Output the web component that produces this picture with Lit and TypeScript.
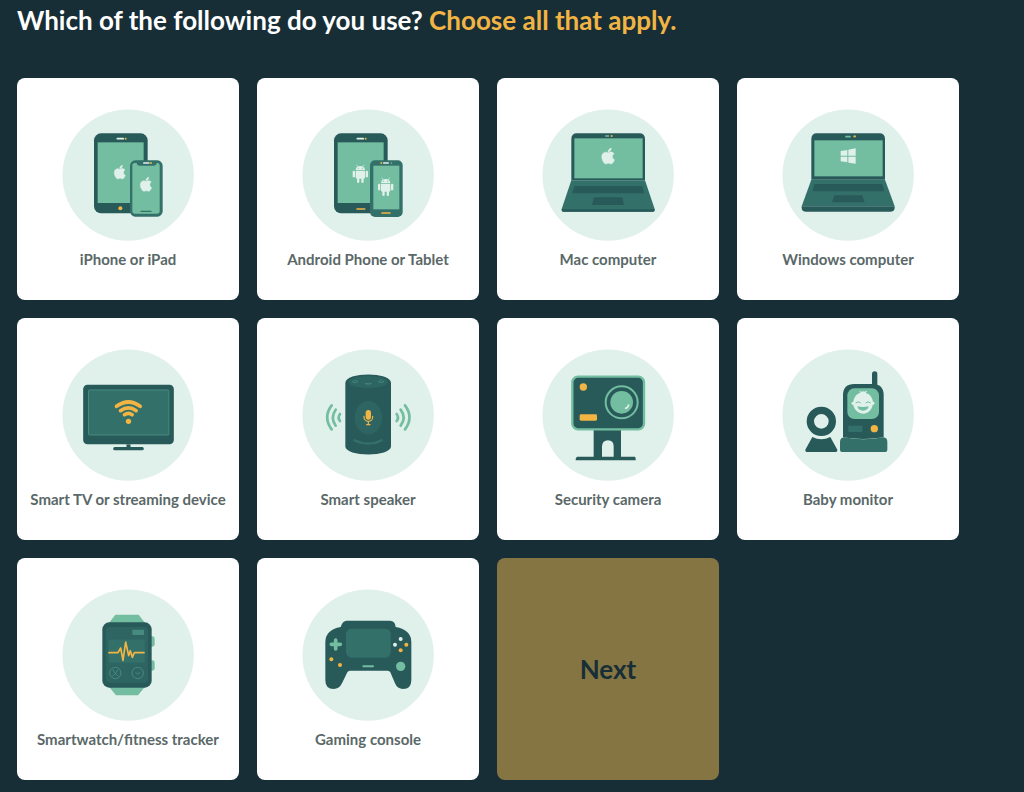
import { LitElement, html, svg, css, type SVGTemplateResult } from "lit";
import { customElement, state } from "lit/decorators.js";

const DARK = "#285a5a";
const MID = "#34706a";
const LIGHT = "#73bda0";
const PALE = "#e0f0ea";
const GOLD = "#f2b544";

const apple = (x: number, y: number, s: number) => svg`
  <path transform="translate(${x} ${y}) scale(${s})" fill=${PALE} stroke=${PALE} stroke-width="0.8"
    d="M12.152 6.896c-.948 0-2.415-1.078-3.96-1.04-2.04.027-3.91 1.183-4.961 3.014-2.117 3.675-.546 9.103 1.519 12.09 1.013 1.454 2.208 3.09 3.792 3.039 1.52-.065 2.09-.987 3.935-.987 1.831 0 2.35.987 3.96.948 1.637-.026 2.676-1.48 3.676-2.948 1.156-1.688 1.636-3.325 1.662-3.415-.039-.013-3.182-1.221-3.22-4.857-.026-3.04 2.48-4.494 2.597-4.559-1.429-2.09-3.623-2.324-4.39-2.376-2-.156-3.675 1.09-4.61 1.09zM15.53 3.83c.843-1.012 1.4-2.427 1.245-3.83-1.207.052-2.662.805-3.532 1.818-.78.896-1.454 2.338-1.273 3.714 1.338.104 2.715-.688 3.559-1.701"/>`;

const robot = (x: number, y: number) => svg`
  <g transform="translate(${x} ${y})" fill=${PALE}>
    <path d="M9 15a14 12 0 0 1 28 0z"/>
    <path d="M12 0l4 6M34 0l-4 6" stroke=${PALE} stroke-width="2" stroke-linecap="round"/>
    <circle cx="17" cy="10" r="1.6" fill=${LIGHT}/><circle cx="29" cy="10" r="1.6" fill=${LIGHT}/>
    <path d="M9 17h28v20a4 4 0 0 1-4 4H13a4 4 0 0 1-4-4z"/>
    <rect x="0" y="17" width="7" height="20" rx="3.5"/>
    <rect x="39" y="17" width="7" height="20" rx="3.5"/>
    <rect x="13" y="36" width="7" height="18" rx="3.5"/>
    <rect x="26" y="36" width="7" height="18" rx="3.5"/>
  </g>`;

const tabletBody = svg`
  <rect x="118" y="99" width="161" height="240" rx="21" fill=${DARK}/>
  <rect x="129" y="126" width="138" height="182" fill=${LIGHT}/>
  <path d="M188 115h18" stroke=${PALE} stroke-width="5" stroke-linecap="round"/>
  <circle cx="213" cy="115" r="3" fill=${GOLD}/>`;

const applePair = svg`
  ${tabletBody}
  <circle cx="197" cy="324" r="6" fill=${GOLD}/>
  ${apple(175, 195, 1.7)}
  <rect x="226" y="180" width="98" height="169" rx="16" fill=${MID}/>
  <path d="M241 188h5q1 8 9 8h42q8 0 9-8h2q7 0 7 8v136q0 8-8 8h-66q-8 0-8-8V196q0-8 8-8z" fill=${LIGHT}/>
  <path d="M267 188h16" stroke=${PALE} stroke-width="4" stroke-linecap="round"/>
  <circle cx="289" cy="188" r="3" fill=${GOLD}/>
  <path d="M259 333h30" stroke=${MID} stroke-width="4" stroke-linecap="round"/>
  ${apple(253, 231, 1.75)}`;

const androidPair = svg`
  ${tabletBody}
  <path d="M187 326h23" stroke=${GOLD} stroke-width="5" stroke-linecap="round"/>
  ${robot(174, 194)}
  <rect x="226" y="180" width="98" height="170" rx="15" fill=${MID}/>
  <rect x="236" y="196" width="78" height="131" fill=${LIGHT}/>
  <path d="M267 188h14" stroke=${PALE} stroke-width="4" stroke-linecap="round"/>
  <circle cx="260" cy="188" r="3" fill=${GOLD}/><circle cx="290" cy="188" r="2.5" fill=${LIGHT}/>
  <path d="M262 338h24" stroke=${GOLD} stroke-width="5" stroke-linecap="round"/>
  ${robot(250, 233)}`;

const mac = svg`
  <path d="M110 240V116q0-17 17-17h187q17 0 17 17v124z" fill=${DARK}/>
  <rect x="119" y="114" width="205" height="120" fill=${LIGHT}/>
  <path d="M213 107h9" stroke=${LIGHT} stroke-width="4" stroke-linecap="round"/>
  <circle cx="231" cy="107" r="3" fill=${GOLD}/>
  ${apple(197, 144, 1.95)}
  <path d="M110 240h221l29 86v3q0 5-5 5H86q-5 0-5-5v-3z" fill=${MID}/>
  <path d="M81 327h279v2q0 5-5 5H86q-5 0-5-5z" fill=${DARK}/>
  <path d="M119 257h204l6 22H113z" fill=${DARK}/>
  <path d="M178 291h85l5 23h-96z" fill=${DARK}/>`;

const windows = svg`
  <path d="M110 238V116q0-17 17-17h187q17 0 17 17v122z" fill=${DARK}/>
  <rect x="119" y="120" width="205" height="108" fill=${LIGHT}/>
  <path d="M214 109h12" stroke=${LIGHT} stroke-width="5" stroke-linecap="round"/>
  <circle cx="240" cy="108" r="3.5" fill=${GOLD}/>
  <path d="M198 152l20-3v17h-20zM221 148l22-4v22h-22zM198 169h20v17l-20-3zM221 169h22v21l-22-3z" fill=${PALE}/>
  <path d="M110 238h221l29 80H81z" fill=${MID}/>
  <path d="M81 318h279v4q0 12-14 12H95q-14 0-14-12z" fill=${DARK}/>
  <path d="M119 251h204l6 22H113z" fill=${DARK}/>
  <path d="M179 285h84l7 21h-98z" fill=${DARK}/>`;

const tv = svg`
  <g transform="translate(-104.5 0)">
    <rect x="190" y="133" width="272" height="179" rx="13" fill=${DARK}/>
    <rect x="206" y="149" width="241" height="135" rx="2" fill=${MID} stroke="#478a7e" stroke-width="3"/>
    <path d="M326 312v12" stroke=${DARK} stroke-width="12"/>
    <path d="M285 325h82" stroke=${DARK} stroke-width="10" stroke-linecap="round"/>
    <g fill="none" stroke=${GOLD} stroke-width="11" stroke-linecap="round">
      <path d="M290 198q36-26 71 0"/><path d="M302 211q24-17 47 0"/><path d="M314 223q12-8 23 0"/>
    </g>
    <circle cx="326" cy="243" r="8" fill=${GOLD}/>
  </g>`;

const speaker = svg`
  <path d="M152 128c0-34 137-34 137 0v190c0 33-137 33-137 0z" fill=${DARK}/>
  <ellipse cx="220.5" cy="125" rx="59" ry="18" fill="#2d6562"/>
  <g fill="none" stroke="#438378" stroke-width="3" stroke-linecap="round">
    <path d="M174 124l8-4 8 4-8 3zM252 124l8-4 8 4-8 3zM212 130q9-3 18 0q-9 4-18 0"/>
  </g>
  <ellipse cx="221" cy="232" rx="41" ry="50" fill="#2e6562"/>
  <path d="M179 300q42 20 82 0" fill="none" stroke=${MID} stroke-width="7" stroke-linecap="round"/>
  <rect x="213" y="209" width="16" height="29" rx="8" fill=${GOLD}/>
  <path d="M208 228v3a13 12 0 0 0 26 0v-3M221 243v10M216 253h10" fill="none" stroke=${GOLD} stroke-width="3.5" stroke-linecap="round"/>
  <g fill="none" stroke=${LIGHT} stroke-width="8" stroke-linecap="round">
    <path d="M111 195q-27 36 0 72M123 208q-17 24 0 48M136 221q-8 11 0 21"/>
    <path d="M331 195q27 36 0 72M318 208q18 24 0 48M306 221q8 11 0 21"/>
  </g>`;

const camera = svg`
  <path d="M177 265h82v84h42q3 4 2 11H123q-1-7 4-11h50zM202 349h35v-31q0-18-17-18t-18 18z" fill=${DARK} fill-rule="evenodd"/>
  <rect x="113" y="109" width="215" height="158" rx="17" fill=${DARK} stroke=${LIGHT} stroke-width="7"/>
  <circle cx="146" cy="140" r="11" fill=${GOLD}/>
  <rect x="135" y="222" width="52" height="19" rx="4" fill=${GOLD}/>
  <circle cx="261" cy="186" r="48" fill="none" stroke=${LIGHT} stroke-width="6"/>
  <circle cx="261" cy="186" r="34" fill=${LIGHT}/>
  <path d="M282 194q-2 8-9 10" fill="none" stroke=${PALE} stroke-width="5" stroke-linecap="round"/>`;

const baby = svg`
  <circle cx="140" cy="243" r="33" fill="none" stroke=${DARK} stroke-width="22"/>
  <path d="M113 290q27 14 54 0l21 38q1 7-7 7H99q-8 0-7-7z" fill=${DARK}/>
  <path d="M300 101v40" stroke=${DARK} stroke-width="16" stroke-linecap="round"/>
  <path d="M205 291V165q0-34 34-34h54q34 0 34 34v126q-61 10-122 0z" fill=${DARK}/>
  <rect x="218" y="144" width="95" height="92" rx="21" fill=${LIGHT}/>
  <path d="M236 184c2-16 12-25 22-27l-4-4q5-1 8 2l3-4 3 4q5-4 9-2l-4 5c12 3 20 12 22 26q6 0 5 5t-6 5c-3 16-14 26-28 26s-27-10-30-26q-6 0-6-5t6-5z" fill=${PALE}/>
  <path d="M244 187q7-6 13 0M274 187q7-6 13 0" fill="none" stroke=${LIGHT} stroke-width="3" stroke-linecap="round"/>
  <path d="M248 198q17 4 34 0q-3 13-17 13t-17-13z" fill=${LIGHT}/>
  <rect x="221" y="256" width="42" height="19" rx="2" fill=${MID}/>
  <circle cx="299" cy="265" r="11" fill=${GOLD}/>
  <path d="M209 291q57 12 117 0q12 1 12 14v24q0 6-6 6H202q-6 0-6-6v-24q0-13 13-14z" fill=${MID}/>`;

const watch = svg`
  <g transform="translate(-75 0)">
    <path d="M238 128l19-25h70l19 25zM238 319l21 26h66l21-26z" fill=${LIGHT}/>
    <rect x="358" y="168" width="17" height="31" rx="7" fill=${LIGHT}/>
    <rect x="358" y="240" width="17" height="31" rx="7" fill=${LIGHT}/>
    <rect x="218" y="126" width="148" height="196" rx="21" fill=${DARK}/>
    <rect x="228" y="140" width="127" height="167" rx="12" fill="#2e6562"/>
    <rect x="308" y="148" width="35" height="16" rx="2" fill="#478a7e"/>
    <rect x="237" y="178" width="108" height="69" fill=${MID}/>
    <path d="M238 217h27l8-14 7 37 8-55 9 41 5-15 6 20 6-14h29" fill="none" stroke=${GOLD} stroke-width="5" stroke-linecap="round" stroke-linejoin="round"/>
    <g fill="none" stroke="#478a7e" stroke-width="3">
      <circle cx="257" cy="278" r="17"/><circle cx="324" cy="278" r="17"/>
      <path d="M249 268q8 14 17 20M265 268q-7 14-17 20M318 276l6 6 7-6"/>
    </g>
  </g>`;

const gamepad = svg`
  <path d="M138 140q6-19 18-19h130q15 0 17 19q47 8 47 46v114q0 26-25 26-17 0-24-17l-14-33q-2-5-8-5H166q-6 0-8 5l-16 33q-8 17-25 17-25 0-25-26V186q0-38 46-46z" fill=${DARK}/>
  <rect x="154" y="145" width="134" height="87" rx="17" fill=${MID}/>
  <path d="M123 179v27M110 192h27" stroke=${LIGHT} stroke-width="11" stroke-linecap="round"/>
  <path d="M206 258h29" stroke=${LIGHT} stroke-width="6" stroke-linecap="round"/>
  <circle cx="318" cy="258" r="14" fill=${LIGHT}/>
  <g fill=${GOLD}>
    <circle cx="110" cy="237" r="6"/><circle cx="136" cy="254" r="6"/>
    <circle cx="335" cy="193" r="6"/><circle cx="318" cy="210" r="6"/>
  </g>
  <circle cx="318" cy="176" r="6" fill=${PALE}/><circle cx="301" cy="193" r="6" fill=${PALE}/>`;

interface Device {
  id: string;
  label: string;
  art: SVGTemplateResult;
}

const DEVICES: Device[] = [
  { id: "ios", label: "iPhone or iPad", art: applePair },
  { id: "android", label: "Android Phone or Tablet", art: androidPair },
  { id: "mac", label: "Mac computer", art: mac },
  { id: "windows", label: "Windows computer", art: windows },
  { id: "tv", label: "Smart TV or streaming device", art: tv },
  { id: "speaker", label: "Smart speaker", art: speaker },
  { id: "camera", label: "Security camera", art: camera },
  { id: "baby", label: "Baby monitor", art: baby },
  { id: "watch", label: "Smartwatch/fitness tracker", art: watch },
  { id: "console", label: "Gaming console", art: gamepad },
];

@customElement("app-root")
export class AppRoot extends LitElement {
  @state() private chosen = new Set<string>();

  static styles = css`
    :host {
      display: block;
      box-sizing: border-box;
      min-height: 100vh;
      padding: 4px 65px 12px 17px;
      background: #172e36;
      font-family: Lato, sans-serif;
      font-weight: 700;
    }
    .title {
      margin: 0 0 42px;
      color: #fff;
      font-size: 26px;
      line-height: 32px;
      font-weight: 700;
    }
    .hint {
      color: #f2b544;
    }
    .grid {
      display: grid;
      grid-template-columns: repeat(4, minmax(0, 1fr));
      gap: 18px;
      margin: 0;
      padding: 0;
      border: 0;
    }
    .card,
    .next {
      box-sizing: border-box;
      aspect-ratio: 1;
      border-radius: 8px;
    }
    .card {
      display: flex;
      flex-direction: column;
      align-items: center;
      gap: 8px;
      padding-top: 31px;
      background: #fff;
      color: #5a6868;
      font-size: 15px;
      line-height: 20px;
      text-align: center;
      cursor: pointer;
    }
    .card:has(.tick:checked),
    .card:has(.tick:focus-visible) {
      box-shadow: 0 0 0 4px #f2b544;
    }
    .tick {
      position: absolute;
      opacity: 0;
      pointer-events: none;
    }
    .art {
      display: block;
      width: 132px;
      height: 132px;
    }
    .next {
      border: 0;
      padding: 0;
      background: #f2b544;
      color: #172e36;
      font: inherit;
      font-size: 26px;
      cursor: pointer;
    }
    .next:disabled {
      background: #857543;
      cursor: default;
    }
  `;

  private toggle(id: string) {
    const next = new Set(this.chosen);
    if (!next.delete(id)) next.add(id);
    this.chosen = next;
  }

  render() {
    return html`
      <h1 class="title" id="question">
        Which of the following do you use? <span class="hint">Choose all that apply.</span>
      </h1>
      <fieldset class="grid" aria-labelledby="question">
        ${DEVICES.map(
          (d) => html`
            <label class="card" for=${d.id}>
              <input class="tick" type="checkbox" id=${d.id}
                .checked=${this.chosen.has(d.id)}
                @change=${() => this.toggle(d.id)} />
              <svg class="art" viewBox="22 26 396 396" aria-hidden="true">
                <circle cx="220.5" cy="224.5" r="197" fill=${PALE}/>
                ${d.art}
              </svg>
              <span>${d.label}</span>
            </label>
          `
        )}
        <button class="next" type="button" ?disabled=${this.chosen.size === 0}>Next</button>
      </fieldset>
    `;
  }
}
